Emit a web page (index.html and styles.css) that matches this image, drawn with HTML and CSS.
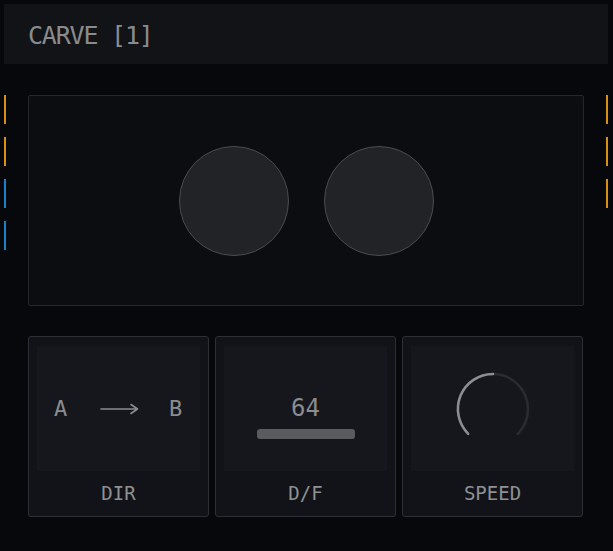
FILE: index.html
```html
<!DOCTYPE html>
<html>
<head>
<meta charset="utf-8">
<link rel="stylesheet" href="styles.css">
</head>
<body>
<div class="page">
  <header class="header"><span class="title">CARVE [1]</span></header>
  <div class="main">
    <div class="rail rail-left">
      <span class="ind orange"></span>
      <span class="ind orange"></span>
      <span class="ind blue"></span>
      <span class="ind blue"></span>
    </div>
    <div class="center">
      <section class="stage">
        <div class="pad"></div>
        <div class="pad"></div>
      </section>
      <section class="cards">
        <div class="card">
          <div class="card-body dir">
            <span class="letter">A</span>
            <svg class="arrow" width="40" height="12" viewBox="0 0 40 12"><path d="M1 6H37M31 1.5L37.5 6L31 10.5" fill="none" stroke="#8b8c90" stroke-width="1.6" stroke-linecap="round" stroke-linejoin="round"/></svg>
            <span class="letter">B</span>
          </div>
          <div class="card-label">DIR</div>
        </div>
        <div class="card">
          <div class="card-body df">
            <span class="value">64</span>
            <span class="bar"></span>
          </div>
          <div class="card-label">D/F</div>
        </div>
        <div class="card">
          <div class="card-body speed">
            <svg width="80" height="80" viewBox="0 0 80 80">
              <path d="M15.2 64.8A35 35 0 1 1 64.8 64.8" fill="none" stroke="#2a2c31" stroke-width="2.5" stroke-linecap="round"/>
              <path d="M15.2 64.8A35 35 0 0 1 40 5" fill="none" stroke="#8d8e92" stroke-width="2.5" stroke-linecap="round"/>
            </svg>
          </div>
          <div class="card-label">SPEED</div>
        </div>
      </section>
    </div>
    <div class="rail rail-right">
      <span class="ind orange"></span>
      <span class="ind orange"></span>
      <span class="ind orange"></span>
    </div>
  </div>
</div>
</body>
</html>
```
FILE: styles.css
```css
html, body {
  margin: 0;
  padding: 0;
  background: #07080b;
}
body {
  width: 613px;
  height: 551px;
  overflow: hidden;
  font-family: "DejaVu Sans Mono", "Liberation Mono", monospace;
  color: #8c8d91;
}
.page {
  padding: 4px 5px 0 4px;
}
.header {
  height: 60px;
  background: #111317;
  display: flex;
  align-items: center;
  padding-left: 24px;
}
.title {
  font-size: 25px;
  letter-spacing: -1.2px;
  color: #8a8b8f;
  padding-top: 2px;
}
.main {
  display: flex;
  margin: 31px -5px 0 -4px;
}
.rail {
  display: flex;
  flex-direction: column;
  gap: 13px;
  flex-shrink: 0;
}
.rail-left {
  width: 28px;
  padding-left: 4px;
  box-sizing: border-box;
}
.rail-right {
  width: 29px;
  padding-left: 22px;
  box-sizing: border-box;
}
.ind {
  display: block;
  width: 2px;
  height: 29px;
}
.orange { background: #d98e16; }
.blue { background: #1a82c8; }
.center {
  width: 556px;
  flex-shrink: 0;
}
.stage {
  height: 211px;
  box-sizing: border-box;
  border: 1px solid #25272c;
  border-radius: 2px;
  background: #0b0d11;
  display: flex;
  align-items: center;
  justify-content: center;
  gap: 35px;
}
.pad {
  width: 110px;
  height: 110px;
  box-sizing: border-box;
  border-radius: 50%;
  background: #222327;
  border: 1.5px solid #4b4c50;
}
.cards {
  margin-top: 30px;
  display: grid;
  grid-template-columns: 181px 181px 181px;
  gap: 6px;
}
.card {
  height: 181px;
  box-sizing: border-box;
  border: 1px solid #2c2f34;
  border-radius: 3px;
  background: #111318;
  padding: 9px 8px 0 8px;
  display: flex;
  flex-direction: column;
}
.card-body {
  height: 125px;
  background: #15171c;
  display: flex;
  align-items: center;
  justify-content: center;
}
.card-label {
  flex: 1;
  display: flex;
  align-items: center;
  justify-content: center;
  font-size: 19px;
  color: #8f9094;
  padding-bottom: 2px;
}
.dir {
  justify-content: flex-start;
  padding-left: 17px;
  gap: 0;
}
.letter {
  font-size: 22px;
  width: 14px;
  color: #8b8c90;
}
.arrow {
  margin: 0 29px 0 32px;
}
.df {
  flex-direction: column;
  gap: 9px;
  padding-top: 18px;
  box-sizing: border-box;
}
.value {
  font-size: 24px;
  line-height: 24px;
  color: #8b8c90;
}
.bar {
  display: block;
  width: 98px;
  height: 10px;
  border-radius: 3px;
  background: #5a5b5f;
}
.speed svg {
  display: block;
  margin-left: 1px;
}
```
